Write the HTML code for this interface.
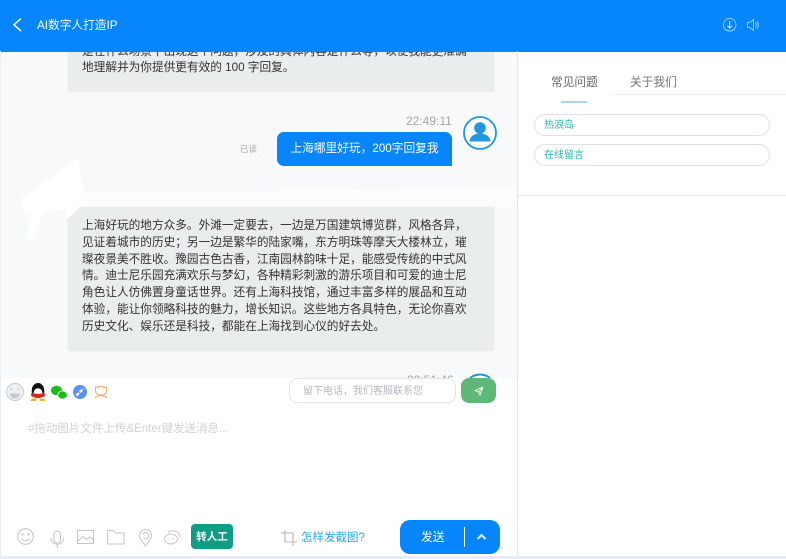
<!DOCTYPE html>
<html lang="zh"><head><meta charset="utf-8"><style>
*{box-sizing:border-box;margin:0;padding:0}
html,body{width:786px;height:559px;overflow:hidden;background:#fff}
body{position:relative;font-family:"Liberation Sans","Noto Sans CJK SC",sans-serif}
#w{position:absolute;left:0;top:0;width:786px;height:559px;overflow:hidden;background:#fff;filter:blur(.3px)}
.a{position:absolute;white-space:nowrap}
.b{background:#e9edee;box-shadow:0 0 2px rgba(0,0,0,.06);border-radius:2px}
.l{position:absolute;left:82px;font-size:11.67px;line-height:17px;color:#333;white-space:nowrap}
svg{position:absolute;overflow:visible}
</style></head><body><div id="w">
<div class="a" style="left:0;top:51px;width:517px;height:327px;background:#f8f9fb"></div>
<div class="a b" style="left:68px;top:40px;width:426px;height:52px"></div>
<div class="l" style="top:43px;clip-path:inset(8px 0 0 0)">是在什么场景下出现这个问题，涉及的具体内容是什么等，以便我能更准确</div>
<div class="l" style="top:59px">地理解并为你提供更有效的 100 字回复。</div>
<div class="a" style="left:0;top:0;width:786px;height:51.500px;background:#0785fa"></div>
<svg style="left:0;top:0" width="786" height="51" fill="none" stroke="#fff"><path d="M21 18.500l-7 6.300 7 6.300" stroke-width="1.500"/><circle cx="729.700" cy="24.700" r="6.300" stroke-width=".8" opacity=".75"/><path d="M729.700 21v7M727.400 25.800l2.300 2.300 2.300-2.300" stroke-width=".9" opacity=".9"/><path d="M747.500 22.500h2.500l3.500-3v11l-3.500-3h-2.500zM755.500 22.500q1.500 2.500 0 5M757 21q2.500 4 0 8" stroke-width=".8" opacity=".75"/></svg>
<div class="a" style="left:37px;top:18px;font-size:11.700px;line-height:16px;color:#fff">AI数字人打造IP</div>
<div class="a" style="left:406px;top:113px;font-size:12px;line-height:16px;color:#a4a4a4">22:49:11</div>
<div class="a" style="left:240px;top:142.500px;font-size:8.500px;line-height:12px;color:#a6a6a6">已读</div>
<div class="a" style="left:277px;top:132px;width:175px;height:34px;background:#0785fa;border-radius:7px 7px 0 7px;color:#fff;font-size:11.700px;line-height:34px;text-align:center">上海哪里好玩，200字回复我</div>
<svg style="left:463px;top:116px" width="34" height="34"><circle cx="17" cy="17" r="16" fill="#fff" stroke="#1f98df" stroke-width="1.800"/><circle cx="17" cy="12" r="5.800" fill="#1f98df"/><path d="M6.500 25.500c1-6.500 6-8 10.500-8s9.500 1.500 10.500 8z" fill="#1f98df"/></svg>
<svg style="left:0;top:150px;filter:blur(1px)" width="517" height="95"><path d="M78 8L22 48 24 65 30 62 26 90 33 90 42 63 70 58 84 40z" fill="#fff"/><path d="M70 42L516 38V57H70z" fill="#fff" opacity=".65"/></svg>
<div class="a b" style="left:68px;top:207px;width:426px;height:144px"></div>
<svg style="left:0;top:0;filter:blur(.6px)" width="100" height="230"><path d="M66 205H83L67 219z" fill="#fff"/></svg>
<div class="l" style="top:217px">上海好玩的地方众多。外滩一定要去，一边是万国建筑博览群，风格各异，</div>
<div class="l" style="top:234px">见证着城市的历史；另一边是繁华的陆家嘴，东方明珠等摩天大楼林立，璀</div>
<div class="l" style="top:251px">璨夜景美不胜收。豫园古色古香，江南园林韵味十足，能感受传统的中式风</div>
<div class="l" style="top:267px">情。迪士尼乐园充满欢乐与梦幻，各种精彩刺激的游乐项目和可爱的迪士尼</div>
<div class="l" style="top:284px">角色让人仿佛置身童话世界。还有上海科技馆，通过丰富多样的展品和互动</div>
<div class="l" style="top:301px">体验，能让你领略科技的魅力，增长知识。这些地方各具特色，无论你喜欢</div>
<div class="l" style="top:318px">历史文化、娱乐还是科技，都能在上海找到心仪的好去处。</div>
<div class="a" style="left:407px;top:372px;font-size:12px;line-height:16px;color:#a4a4a4">22:51:46</div>
<svg style="left:463px;top:374px" width="34" height="4"><path d="M7 4a16 16 0 0 1 20 0" fill="none" stroke="#1f98df" stroke-width="2"/></svg>
<div class="a" style="left:0;top:378px;width:517px;height:181px;background:#fff"></div>
<div class="a" style="left:0;top:51px;width:1px;height:508px;background:#eceef2"></div>
<div class="a" style="left:517px;top:51px;width:1px;height:508px;background:#e6e6e6"></div>
<div class="a" style="left:0;top:556px;width:786px;height:3px;background:#e9ecf8"></div>
<div class="a" style="left:518px;top:51.500px;width:268px;height:144.500px;background:#fff;border-bottom:1px solid #e4e4e4"></div>
<div class="a" style="left:551px;top:75px;font-size:11.700px;line-height:16px;color:#666">常见问题</div>
<div class="a" style="left:630px;top:75px;font-size:11.700px;line-height:16px;color:#777">关于我们</div>
<div class="a" style="left:613px;top:94px;width:173px;height:1px;background:#eee"></div>
<div class="a" style="left:561px;top:101px;width:26px;height:2px;background:#a8d3fb"></div>
<div class="a" style="left:534px;top:114px;width:236px;height:22px;border:1px solid #e0e0e0;border-radius:11px;padding-left:9px;font-size:10px;line-height:21px;color:#26b5ad">热浪岛</div>
<div class="a" style="left:534px;top:144px;width:236px;height:22px;border:1px solid #e0e0e0;border-radius:11px;padding-left:9px;font-size:10px;line-height:21px;color:#26b5ad">在线留言</div>
<svg style="left:0;top:378px" width="120" height="30"><circle cx="15" cy="14" r="8.500" fill="#eef0f4" stroke="#c5c9d2" stroke-width="1"/><path d="M10 15.500a5 5 0 0 0 10 0z" fill="#c5c9d2"/><circle cx="11.500" cy="11" r="1" fill="#c5c9d2"/><circle cx="18.500" cy="11" r="1" fill="#c5c9d2"/>
<ellipse cx="38" cy="12.500" rx="6.300" ry="7.500" fill="#111"/><ellipse cx="38" cy="15" rx="4.400" ry="4.800" fill="#fff"/><path d="M31.500 14.500q6.500 3 13 0l.5 3.500q-7 4-14 0z" fill="#d8281f"/><path d="M32 20.500h5l-1.500 2.500h-5zM39 20.500h5l1.500 2.500h-5z" fill="#f0ad1d"/>
<ellipse cx="56.500" cy="12.500" rx="5.500" ry="4.700" fill="#1fba1c"/><ellipse cx="62.500" cy="17" rx="4.800" ry="4" fill="#1fba1c" stroke="#fff" stroke-width=".7"/>
<circle cx="80" cy="14" r="7" fill="#5a8ff5"/><path d="M76.500 17.500l7-7" stroke="#fff" stroke-width="2.500" stroke-dasharray="3.500 1.200"/>
<path d="M101 9l2-1 .5 1.500L106.500 9v3.500q0 3.500-3 4.500h-5q-3-1-3-4.500V9l3 .5.500-1.500z" fill="none" stroke="#f1a44c" stroke-width=".9"/><path d="M95 20q3-2.500 6-2.500t6 2.500" fill="none" stroke="#f1a44c" stroke-width=".9"/></svg>
<div class="a" style="left:289px;top:378px;width:167px;height:25px;border:1px solid #e3e5ec;border-radius:8px;background:#fff;padding-left:13px;font-size:10px;line-height:26px;color:#b5b8c2">留下电话，我们客服联系您</div>
<div class="a" style="left:461px;top:378px;width:35px;height:25px;background:#5fb878;border-radius:8px"></div>
<svg style="left:461px;top:378px" width="35" height="25" fill="none" stroke="#fff" stroke-width=".9"><path d="M14 12.500l8-3.500-3 8-1.500-3zM17.500 14l4.500-5" stroke-linejoin="round"/></svg>
<div class="a" style="left:28px;top:421px;font-size:11.500px;line-height:16px;color:#d2d2d2">#拖动图片文件上传&amp;Enter键发送消息...</div>
<svg style="left:0;top:510px" width="200" height="49" fill="none" stroke="#c4c4c4" stroke-width="1"><circle cx="25.500" cy="26.500" r="7.800"/><circle cx="22.500" cy="24.500" r=".6" fill="#c4c4c4"/><circle cx="28.500" cy="24.500" r=".6" fill="#c4c4c4"/><path d="M21.500 29q4 3.500 8 0"/>
<rect x="54" y="21" width="6.500" height="12" rx="3.250"/><path d="M51 28a6.200 6.200 0 0 0 12.500 0M57.300 34.500v3.500"/>
<rect x="77.500" y="20.500" width="16" height="13"/><path d="M78 31l5-4.500 4 3 3-2.500 3.500 3"/>
<path d="M107.500 34V20.500h6l2 2.500h8.500v11z"/>
<path d="M145.500 36l-4.500-6.500a6 6 0 1 1 9 0z"/><path d="M143 24a3.200 3.200 0 1 1 .5 4"/>
<ellipse cx="171" cy="29" rx="6.500" ry="5"/><path d="M168 22q5-2.500 9 0 3.500 2.500 3 5.500"/><path d="M168.500 29h.6M171 29h.6M173.300 29h.6" stroke-width="1"/></svg>
<div class="a" style="left:191px;top:524px;width:42px;height:25px;background:#0f9d85;border-radius:4px;color:#fff;font-size:10.500px;font-weight:bold;line-height:26px;text-align:center">转人工</div>
<svg style="left:281px;top:530px" width="16" height="16" fill="none" stroke="#b5b5b5" stroke-width="1.100"><path d="M0 3h12v13M4 0v12h12"/></svg>
<div class="a" style="left:301px;top:530px;font-size:11.500px;line-height:16px;color:#28a8ee">怎样发截图?</div>
<div class="a" style="left:399.500px;top:520px;width:100.500px;height:33.500px;background:#0785fa;border-radius:10px"></div>
<div class="a" style="left:421px;top:530px;font-size:11.700px;line-height:16px;color:#fff">发送</div>
<div class="a" style="left:464px;top:527px;width:1px;height:20px;background:#fff"></div>
<svg style="left:476px;top:533px" width="11" height="8" fill="none" stroke="#dfeefd" stroke-width="2"><path d="M1.500 6L5.500 2l4 4"/></svg>
</div></body></html>
